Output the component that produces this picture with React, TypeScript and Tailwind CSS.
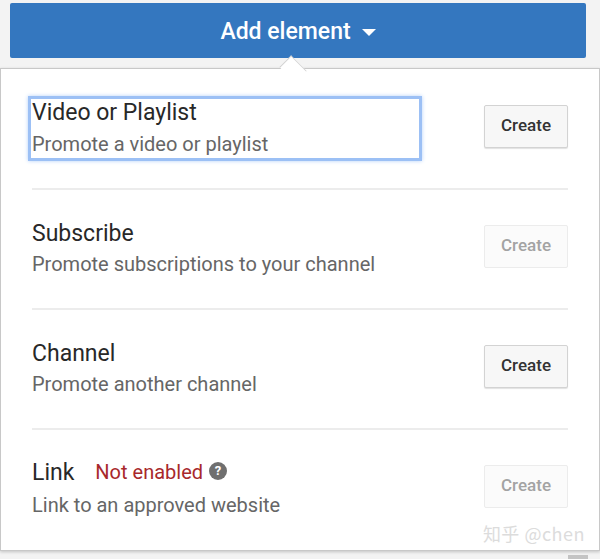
import { ReactNode } from 'react';

const rows = [
  { title: 'Video or Playlist', desc: 'Promote a video or playlist', disabled: false, focused: true },
  { title: 'Subscribe', desc: 'Promote subscriptions to your channel', disabled: true },
  { title: 'Channel', desc: 'Promote another channel', disabled: false },
  { title: 'Link', desc: 'Link to an approved website', disabled: true, notEnabled: true },
];

function CreateButton({ disabled }: { disabled: boolean }) {
  return (
    <button
      className={
        disabled
          ? 'mb-[3px] w-[84px] h-[43px] rounded-[2px] border border-[#ececec] bg-[#fbfbfb] text-[#a3a3a3] text-[17px] font-medium'
          : 'mb-[3px] w-[84px] h-[43px] rounded-[2px] border border-[#d3d3d3] bg-[#f7f7f7] text-[#333] text-[17px] font-medium shadow-[0_1px_1px_rgba(0,0,0,0.12)]'
      }
    >
      Create
    </button>
  );
}

function Row({ children, disabled, last }: { children: ReactNode; disabled: boolean; last?: boolean }) {
  return (
    <div className={`h-[120px] pb-[3px] flex items-center justify-between border-b-2 ${last ? 'border-transparent' : 'border-[#ececec]'}`}>
      {children}
      <CreateButton disabled={disabled} />
    </div>
  );
}

export default function App() {
  return (
    <div className="w-[600px] h-[559px] bg-[#f3f3f3] overflow-hidden relative font-['Roboto',sans-serif]">
      {/* Add element button */}
      <div className="pt-[3px] pl-[10px]">
        <button className="w-[576px] h-[55px] pt-[4px] rounded-[2px] bg-[#3477bf] text-white text-[23px] font-medium flex items-center justify-center gap-[11px]">
          Add element
          <span className="w-0 h-0 border-x-[7px] border-x-transparent border-t-[7px] border-t-white" />
        </button>
      </div>

      {/* Panel */}
      <div className="mt-[10px] w-[600px] h-[483px] bg-white border border-[#c8c8c8] shadow-[0_1px_3px_rgba(0,0,0,0.2)] relative px-[31px] pt-[1px]">
        <div className="absolute left-[281px] -top-[11px] w-[22px] h-[22px] rotate-45 bg-white border-l border-t border-[#d0d0d0] scale-y-75" />
        <div className="relative">
          {rows.map((row, i) => (
            <Row key={row.title} disabled={row.disabled} last={i === rows.length - 1}>
              <div
                className={
                  row.focused
                    ? '-ml-[4px] pl-[1px] pb-[1px] w-[394px] h-[65px] mt-[2px] border-[3px] border-[#9cc0f5] shadow-[0_0_4px_#b4d0f8] flex flex-col justify-center'
                    : 'flex flex-col justify-center'
                }
              >
                <div className={`flex items-center text-[23px] leading-[31px] text-[#282828] ${row.focused ? '-mt-[2px]' : ''}`}>
                  {row.title}
                  {row.notEnabled && (
                    <>
                      <span className="ml-[21px] text-[20px] text-[#a8282b]">Not enabled</span>
                      <span className="ml-[6px] mt-[-3px] w-[18px] h-[18px] rounded-full bg-[#6f6f6f] text-white text-[13px] font-bold leading-[18px] text-center">
                        ?
                      </span>
                    </>
                  )}
                </div>
                <div className={`${row.notEnabled ? 'mt-[4px]' : row.focused ? 'mt-[3px]' : 'mt-[2px]'} text-[20px] leading-[27px] text-[#666]`}>{row.desc}</div>
              </div>
            </Row>
          ))}
        </div>
        <div className="absolute right-[14px] bottom-[3px] text-[18px] tracking-[0.5px] text-[#dcdcdc] font-['Noto_Sans_CJK_SC',sans-serif]">
          知乎 @chen
        </div>
      </div>
      {/* scrollbar stub at the bottom edge */}
      <div className="absolute left-[568px] top-[555px] w-[20px] h-[4px] bg-[#c4c4c4]" />
    </div>
  );
}
